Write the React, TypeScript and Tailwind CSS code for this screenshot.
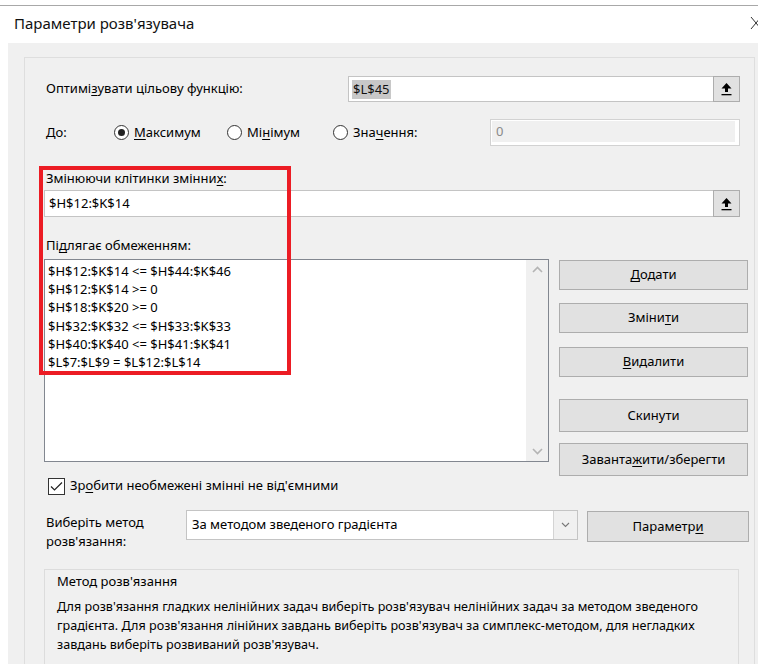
import React from "react";

const font = { fontFamily: '"Noto Sans", "Open Sans", Arial, sans-serif' };

function U({ children }: { children: React.ReactNode }) {
  return <span className="underline underline-offset-2">{children}</span>;
}

function RefButton() {
  return (
    <div className="w-[27px] h-full border border-[#adadad] bg-[#e1e1e1] flex items-center justify-center shrink-0">
      <svg width="13" height="14" viewBox="0 0 13 14">
        <path d="M6.5 1 L11.5 6.5 L8 6.5 L8 10 L5 10 L5 6.5 L1.5 6.5 Z" fill="#000" />
        <rect x="1.5" y="12" width="10" height="1.3" fill="#000" />
      </svg>
    </div>
  );
}

function Radio({ checked, children }: { checked?: boolean; children: React.ReactNode }) {
  return (
    <div className="flex items-center gap-[5px]">
      <div className="w-[15px] h-[15px] rounded-full border border-[#333] bg-white flex items-center justify-center">
        {checked && <div className="w-[7px] h-[7px] rounded-full bg-[#222]" />}
      </div>
      <span>{children}</span>
    </div>
  );
}

function Btn({ children, className = "" }: { children: React.ReactNode; className?: string }) {
  return (
    <div
      className={
        "shrink-0 border border-[#adadad] bg-[#e1e1e1] flex items-center justify-center text-[13px] text-black " +
        className
      }
    >
      {children}
    </div>
  );
}

const constraints = [
  "$H$12:$K$14 <= $H$44:$K$46",
  "$H$12:$K$14 >= 0",
  "$H$18:$K$20 >= 0",
  "$H$32:$K$32 <= $H$33:$K$33",
  "$H$40:$K$40 <= $H$41:$K$41",
  "$L$7:$L$9 = $L$12:$L$14",
];

export default function App() {
  return (
    <div
      className="relative w-[758px] h-[664px] overflow-hidden bg-white text-[13px] text-black flex flex-col"
      style={font}
    >
      {/* window top edge */}
      <div className="h-[5px] bg-white shrink-0" />
      <div className="h-px bg-[#a8a8a8] shrink-0" />
      {/* title bar */}
      <div className="h-[37px] shrink-0 flex items-center justify-between pl-[14px] bg-white">
        <span className="text-[15px] text-[#111] -mt-[3px]">Параметри розв'язувача</span>
        <svg width="12" height="14" viewBox="0 0 12 14" className="-mr-[4px] -mt-[4px]">
          <path d="M1 1 L11 13 M11 1 L1 13" stroke="#333" strokeWidth="1" fill="none" />
        </svg>
      </div>
      {/* body */}
      <div className="flex-1 ml-[8px] bg-[#f0f0f0] pl-[16px] pt-[14px] pr-[3px]">
        <div className="border border-[#dedede] h-[700px] pl-[19px] pr-[5px] pt-[18px]">
          {/* objective */}
          <div className="flex items-center h-[26px] mr-[9px]">
            <div className="w-[304px] shrink-0 pl-[2px]">
              Оптимі<U>з</U>увати цільову функцію:
            </div>
            <div className="flex-1 h-full flex border border-[#c4c4c4] bg-white border-r-0">
              <div className="flex-1 flex items-center pl-[3px]">
                <span className="bg-[#c8c8c8] text-[#111] leading-[19px] px-px">$L$45</span>
              </div>
            </div>
            <RefButton />
          </div>
          {/* radio row */}
          <div className="flex items-center h-[27px] mt-[17px] mr-[9px]">
            <div className="w-[70px] shrink-0 pl-[2px]">До:</div>
            <div className="w-[113px] shrink-0">
              <Radio checked>
                <U>М</U>аксимум
              </Radio>
            </div>
            <div className="w-[106px] shrink-0">
              <Radio>
                Мі<U>н</U>імум
              </Radio>
            </div>
            <div className="w-[157px] shrink-0">
              <Radio>
                Зна<U>ч</U>ення:
              </Radio>
            </div>
            <div className="flex-1 h-full border border-[#d2d2d2] bg-white p-px pr-[4px] pb-[3px]">
              <div className="h-full bg-[#f0f0f0] pl-[4px] flex items-center text-[#8a8a8a]">0</div>
            </div>
          </div>
          {/* changing cells */}
          <div className="mt-[23px] pl-[2px] h-[19px] leading-[19px]">
            Змінюючи клітинки змінни<U>х</U>:
          </div>
          <div className="flex h-[27px] mt-[2px] mr-[9px]">
            <div className="flex-1 h-full border border-[#c4c4c4] border-r-0 bg-white flex items-center pl-[4px]">
              $H$12:$K$14
            </div>
            <RefButton />
          </div>
          {/* constraints */}
          <div className="mt-[19px] pl-[2px] h-[19px] leading-[19px]">
            Пі<U>д</U>лягає обмеженням:
          </div>
          <div className="flex mt-[4px]">
            <div className="w-[505px] shrink-0 h-[203px] border border-[#828790] bg-white flex">
              <div className="flex-1 pl-[3px] pt-[2px]">
                {constraints.map((c) => (
                  <div key={c} className="h-[18.2px] leading-[18px] whitespace-pre">
                    {c}
                  </div>
                ))}
              </div>
              <div className="w-[22px] bg-[#f0f0f0] flex flex-col justify-between items-center py-[6px]">
                <svg width="11" height="7" viewBox="0 0 11 7">
                  <path d="M1 6 L5.5 1.5 L10 6" stroke="#b4b4b4" strokeWidth="1.6" fill="none" />
                </svg>
                <svg width="11" height="7" viewBox="0 0 11 7">
                  <path d="M1 1 L5.5 5.5 L10 1" stroke="#b4b4b4" strokeWidth="1.6" fill="none" />
                </svg>
              </div>
            </div>
            <div className="ml-[10px] flex flex-col">
              <Btn className="w-[189px] h-[30px] mt-px">
                <U>Д</U>одати
              </Btn>
              <Btn className="w-[189px] h-[30px] mt-[13px]">
                Зміни<U>т</U>и
              </Btn>
              <Btn className="w-[189px] h-[30px] mt-[14px]">
                <U>В</U>идалити
              </Btn>
              <Btn className="w-[189px] h-[33px] mt-[22px]">Скинути</Btn>
              <Btn className="w-[189px] h-[33px] mt-[11px]">
                Заванта<U>ж</U>ити/зберегти
              </Btn>
            </div>
          </div>
          {/* non-negative checkbox */}
          <div className="flex items-center mt-[1px] pl-[4px] h-[18px]">
            <div className="w-[17px] h-[17px] border border-[#333] bg-white flex items-center justify-center">
              <svg width="13" height="11" viewBox="0 0 13 11">
                <path d="M1 5.5 L4.5 9 L12 1.5" stroke="#222" strokeWidth="1.2" fill="none" />
              </svg>
            </div>
            <span className="ml-[5px]">
              Зр<U>о</U>бити необмежені змінні не від'ємними
            </span>
          </div>
          {/* solving method */}
          <div className="flex mt-[15px]">
            <div className="w-[142px] shrink-0 pl-[2px] leading-[19px] pt-[3px]">
              Виберіть метод
              <br />
              розв'язання:
            </div>
            <div className="w-[392px] shrink-0 h-[30px] border border-[#c4c4c4] bg-white flex">
              <div className="flex-1 flex items-center pl-[5px]">За методом зведеного градієнта</div>
              <div className="w-[24px] border-l border-[#d4d4d4] bg-[#f0f0f0] flex items-center justify-center">
                <svg width="9" height="6" viewBox="0 0 9 6">
                  <path d="M1 1 L4.5 4.5 L8 1" stroke="#777" strokeWidth="1.1" fill="none" />
                </svg>
              </div>
            </div>
            <Btn className="w-[162px] h-[31px] ml-[9px] mt-px">
              Параметр<U>и</U>
            </Btn>
          </div>
          {/* method description */}
          <div className="mt-[18px] w-[695px] border border-[#dcdcdc] h-[120px] pl-[12px] pt-[2px] leading-[19px]">
            <div>Метод розв'язання</div>
            <div className="mt-[6px] w-[670px] text-[12.6px]">
              Для розв'язання гладких нелінійних задач виберіть розв'язувач нелінійних задач за методом зведеного
              градієнта. Для розв'язання лінійних завдань виберіть розв'язувач за симплекс-методом, для негладких
              завдань виберіть розвиваний розв'язувач.
            </div>
          </div>
        </div>
      </div>
      {/* highlight frame around the variable cells and constraints */}
      <div className="pointer-events-none absolute left-[39px] top-[166px] w-[252px] h-[209px] border-[4px] border-[#ec1c24]" />
    </div>
  );
}
